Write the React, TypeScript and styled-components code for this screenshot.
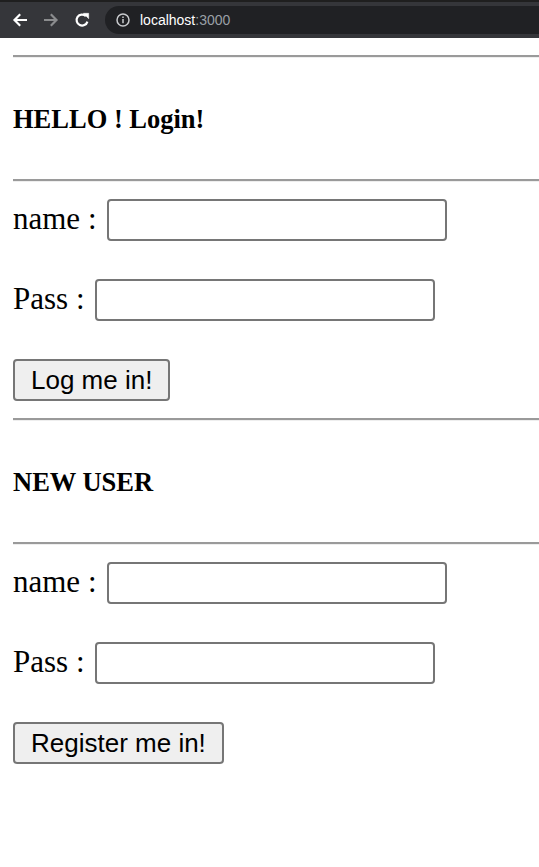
import * as React from "react";
import styled, { createGlobalStyle } from "styled-components";

const GlobalStyle = createGlobalStyle`
  html, body {
    margin: 0;
    padding: 0;
    background: #ffffff;
    overflow: hidden;
  }
  body {
    font-family: "Liberation Serif", "Times New Roman", serif;
    color: #000000;
  }
`;

const Window = styled.div`
  width: 539px;
  height: 867px;
  display: flex;
  flex-direction: column;
  background: #ffffff;
`;

const Toolbar = styled.div`
  height: 36px;
  border-top: 2px solid #1f1f1f;
  background: #35363a;
  display: flex;
  align-items: center;
  padding-left: 12px;
`;

const NavButton = styled.div<{ $dim?: boolean }>`
  width: 31px;
  height: 24px;
  display: flex;
  align-items: center;
  color: ${(p) => (p.$dim ? "#8b8c8e" : "#ffffff")};
`;

const Omnibox = styled.div`
  flex: 1;
  height: 28px;
  border-radius: 14px 0 0 14px;
  background: #202124;
  display: flex;
  align-items: center;
  padding-left: 11px;
  gap: 10px;
  font-family: "Liberation Sans", Arial, sans-serif;
  font-size: 14px;
`;

const Host = styled.span`
  color: #ffffff;
`;

const Port = styled.span`
  color: #9aa0a6;
`;

const Page = styled.div`
  flex: 1;
  padding: 17px 0 0 13px;
  display: flex;
  flex-direction: column;
`;

const Rule = styled.div`
  height: 2px;
  background: #9a9a9a;
  border-bottom: 1px solid #eeeeee;
`;

const Heading = styled.h3`
  margin: 0;
  padding: 46px 0 45px;
  font-size: 26.5px;
  line-height: 30px;
  font-weight: bold;
`;

const Form = styled.div`
  display: flex;
  flex-direction: column;
  gap: 38px;
  padding: 17px 0 17px;
`;

const Row = styled.div`
  display: flex;
  align-items: center;
  gap: 10px;
`;

const Label = styled.span`
  font-size: 31px;
  line-height: 36px;
  margin-bottom: 3px;
`;

const Field = styled.input`
  box-sizing: border-box;
  width: 340px;
  height: 42px;
  border: 2px solid #767676;
  border-radius: 4px;
  background: #ffffff;
  padding: 0 6px;
  font-size: 24px;
  margin: 0;
`;

const Button = styled.button`
  align-self: flex-start;
  box-sizing: border-box;
  height: 42px;
  padding: 0 16px;
  border: 2px solid #767676;
  border-radius: 4px;
  background: #efefef;
  color: #000000;
  font-family: "Liberation Sans", Arial, sans-serif;
  font-size: 26px;
  line-height: 1;
  margin: 0;
`;

const BackIcon = () => (
  <svg width="16" height="16" viewBox="0 0 16 16" fill="none" stroke="currentColor" strokeWidth="2.2">
    <path d="M15 8H2.5M8.2 2.3L2.5 8L8.2 13.7" />
  </svg>
);

const ForwardIcon = () => (
  <svg width="16" height="16" viewBox="0 0 16 16" fill="none" stroke="currentColor" strokeWidth="2.2">
    <path d="M1 8H13.5M7.8 2.3L13.5 8L7.8 13.7" />
  </svg>
);

const ReloadIcon = () => (
  <svg width="16" height="16" viewBox="0 0 16 16" fill="none" stroke="currentColor" strokeWidth="2.2">
    <path d="M13.4 9.6A5.5 5.5 0 1 1 11.9 4.1" />
    <path d="M9.3 1.3H14.7V6.7Z" fill="currentColor" strokeWidth="0.5" />
  </svg>
);

const InfoIcon = () => (
  <svg width="14" height="14" viewBox="0 0 14 14" fill="none">
    <circle cx="7" cy="7" r="6" stroke="#c8cacd" strokeWidth="1.5" />
    <rect x="6.25" y="6" width="1.5" height="4.2" fill="#c8cacd" />
    <rect x="6.25" y="3.5" width="1.5" height="1.5" fill="#c8cacd" />
  </svg>
);

type SectionProps = { title: string; action: string };

const Section = ({ title, action }: SectionProps) => (
  <>
    <Rule />
    <Heading>{title}</Heading>
    <Rule />
    <Form>
      <Row>
        <Label>name :</Label>
        <Field type="text" />
      </Row>
      <Row>
        <Label>Pass :</Label>
        <Field type="password" />
      </Row>
      <Button>{action}</Button>
    </Form>
  </>
);

const App = () => (
  <Window>
    <GlobalStyle />
    <Toolbar>
      <NavButton>
        <BackIcon />
      </NavButton>
      <NavButton $dim>
        <ForwardIcon />
      </NavButton>
      <NavButton>
        <ReloadIcon />
      </NavButton>
      <Omnibox>
        <InfoIcon />
        <span>
          <Host>localhost</Host>
          <Port>:3000</Port>
        </span>
      </Omnibox>
    </Toolbar>
    <Page>
      <Section title="HELLO ! Login!" action="Log me in!" />
      <Section title="NEW USER" action="Register me in!" />
    </Page>
  </Window>
);

export default App;
